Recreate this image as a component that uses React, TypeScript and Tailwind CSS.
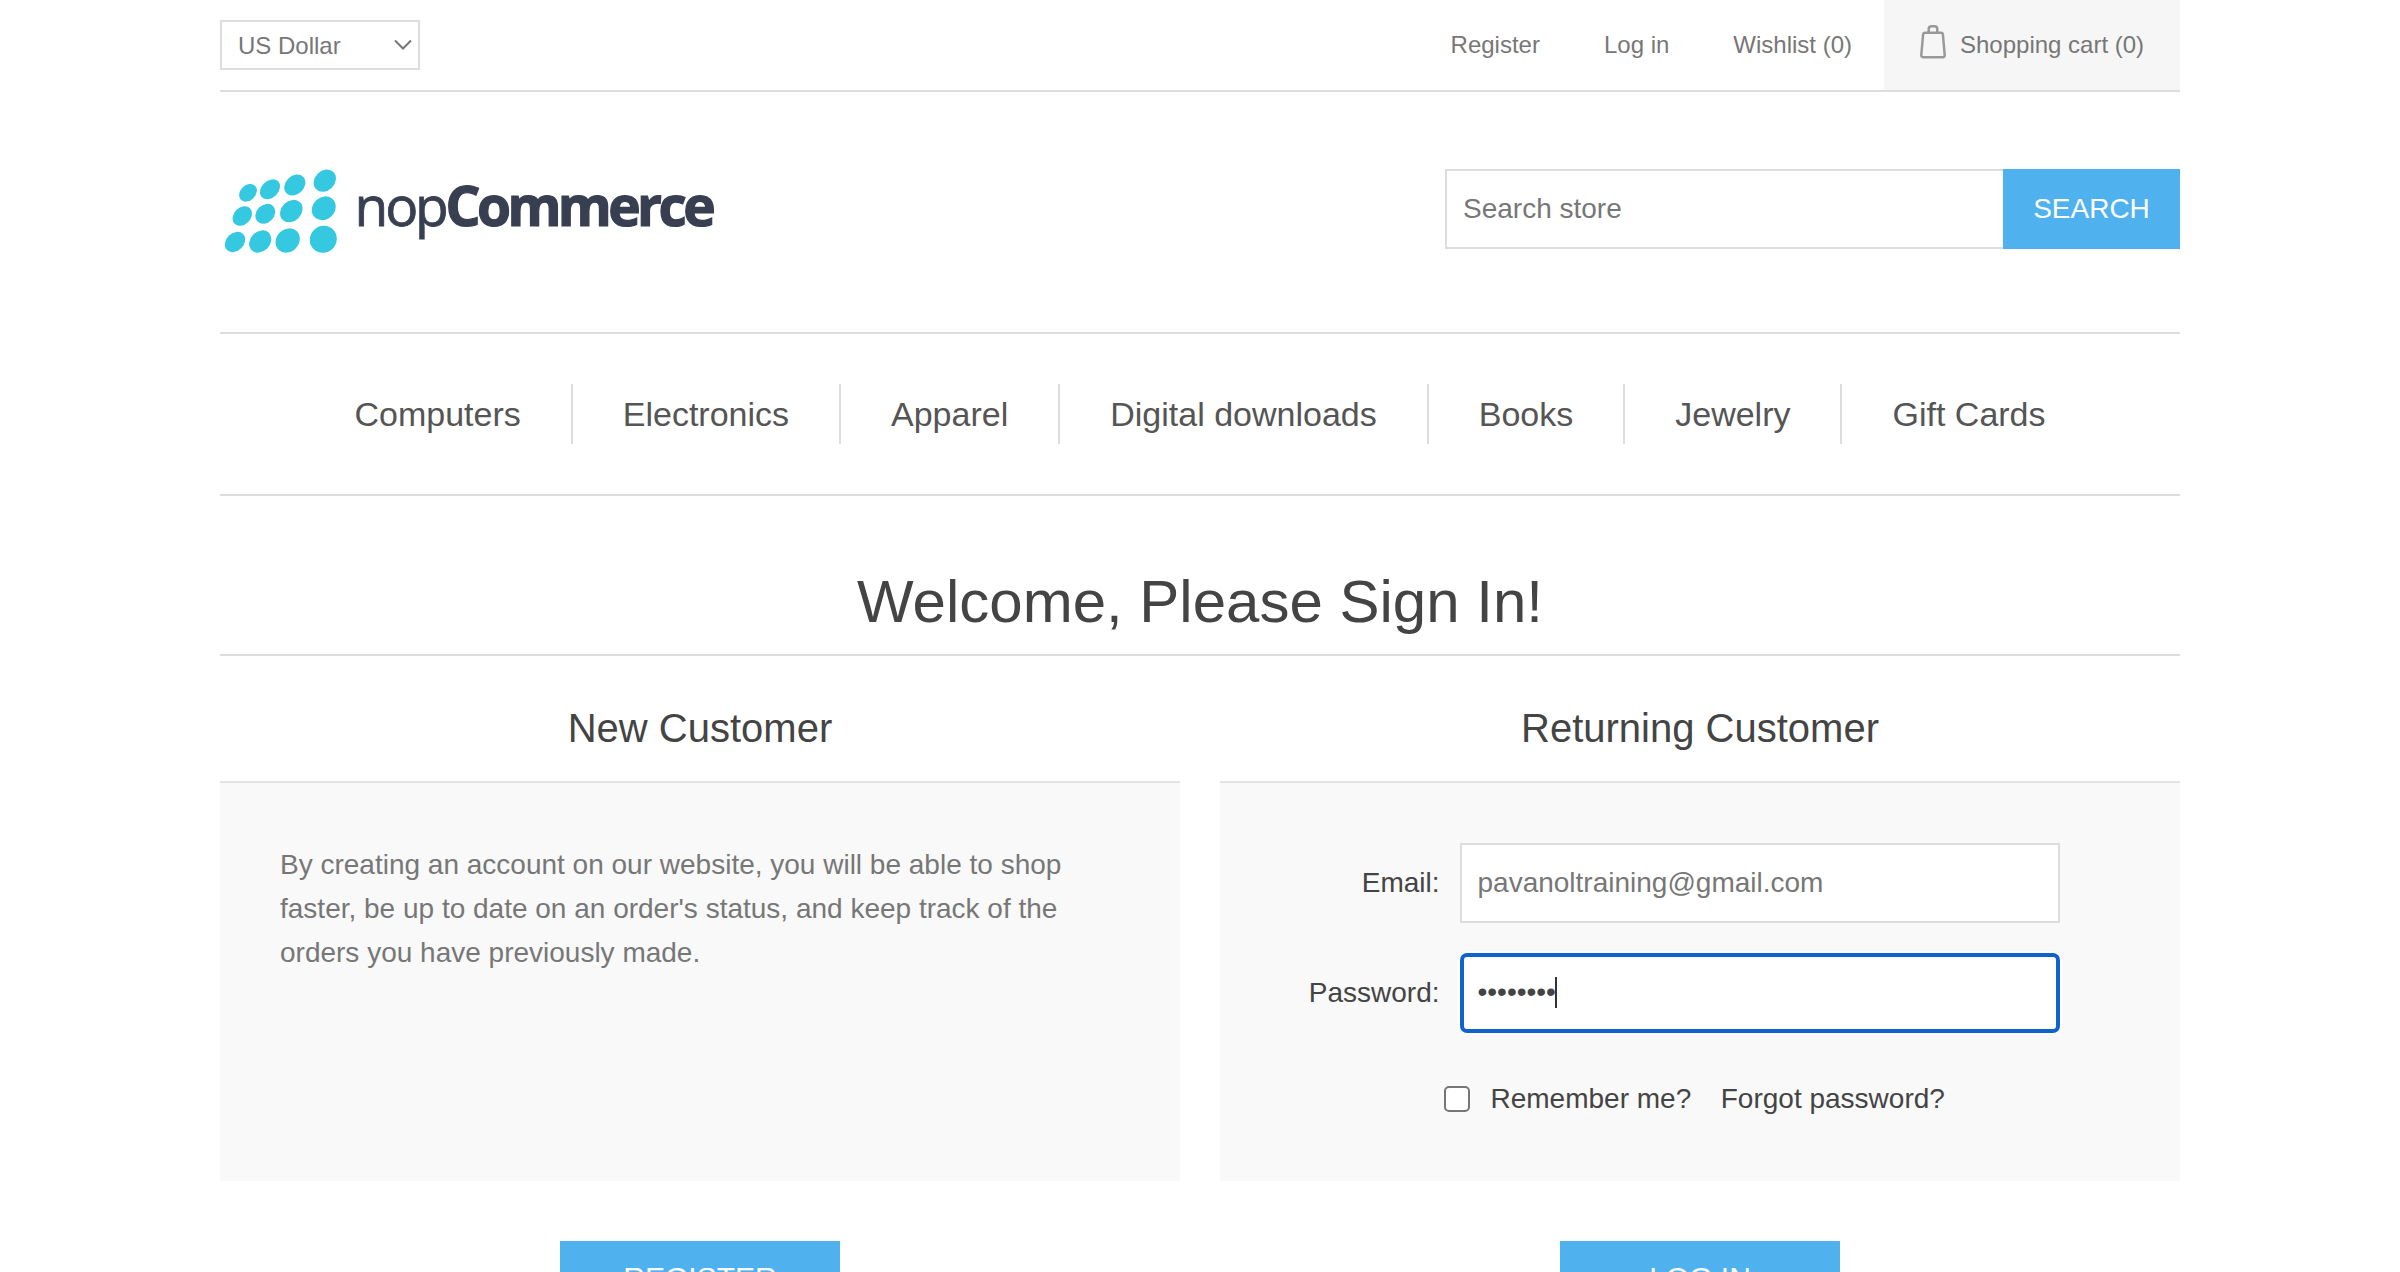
const dots = [
  [248, 192.3, 10, 7.6], [270, 188.8, 11.4, 8.4], [294.8, 184.5, 11.8, 9.2], [324.8, 180.2, 12.2, 10],
  [242.3, 215.5, 10.9, 8.4], [265.3, 213.3, 11, 8.8], [291.3, 210.6, 12.4, 10], [323.8, 207.8, 12.8, 11],
  [235, 241.5, 11.4, 8.8], [260.2, 241, 12.3, 9.8], [287.7, 240, 13, 11.2], [323.3, 238.8, 13.8, 13.2],
];

function Logo() {
  return (
    <svg width="500" height="120" viewBox="220 149.5 500 120" className="block blur-[0.6px]" aria-label="nopCommerce">
      <g fill="#34c8e1">
        {dots.map(([x, y, a, b]) => (
          <ellipse key={`${x}-${y}`} cx={x} cy={y} rx={a} ry={b} transform={`rotate(-45 ${x} ${y})`} />
        ))}
      </g>
      <g fill="#383f50" stroke="#383f50" fontFamily='"Open Sans", sans-serif' fontSize="55">
        <text x="354.5" y="225" strokeWidth="0.8" letterSpacing="-3.1">nop</text>
        <text x="445.5" y="225" strokeWidth="1.2" fontWeight="700" letterSpacing="-3.6">Commerce</text>
      </g>
    </svg>
  );
}

const categories = ["Computers", "Electronics", "Apparel", "Digital downloads", "Books", "Jewelry", "Gift Cards"];

export default function App() {
  return (
    <div className="h-[1272px] w-[2400px] overflow-hidden bg-white font-['Liberation_Sans',Arial,sans-serif] text-[28px] text-[#444]">
      <div className="mx-auto w-[1960px]">
        <div className="flex h-[92px] items-start justify-between border-b-2 border-[#ddd] text-[24px] text-[#777]">
          <div className="mt-5 flex h-[50px] w-[200px] items-center justify-between border-2 border-[#ddd] pr-1.5 pl-4">
            <span className="pt-0.5">US Dollar</span>
            <svg width="18" height="12" viewBox="0 0 18 12" fill="none" stroke="#777" strokeWidth="2">
              <path d="M1 1.5 9 9.5 17 1.5" />
            </svg>
          </div>
          <div className="flex h-[90px] items-center">
            <a className="mr-16">Register</a>
            <a className="mr-16">Log in</a>
            <a className="mr-8">Wishlist (0)</a>
            <a className="flex h-[90px] w-[296px] items-center bg-[#f6f6f6] pl-9">
              <svg width="26" height="36" viewBox="0 0 26 36" fill="none" stroke="#999" strokeWidth="2.5" className="mr-[14px] mb-1.5 blur-[0.4px]">
                <path d="M5 8.7H21Q22.7 8.7 22.9 10.5L24.7 31Q24.8 33.2 22.7 33.2H3.3Q1.2 33.2 1.3 31L3.1 10.5Q3.3 8.7 5 8.7ZM8.7 8.5V5Q8.7 2.2 11.5 2.2H14.5Q17.3 2.2 17.3 5V8.5" />
              </svg>
              Shopping cart (0)
            </a>
          </div>
        </div>

        <div className="flex h-[242px] items-start justify-between border-b-2 border-[#ddd]">
          <div className="mt-[58px]"><Logo /></div>
          <div className="mt-[77px] flex h-20 w-[735px]">
            <div className="flex flex-1 items-center border-2 border-r-0 border-[#ddd] pl-4 text-[#777]">Search store</div>
            <button className="w-[177px] bg-[#50b1ef] text-white">SEARCH</button>
          </div>
        </div>

        <nav className="flex h-[162px] items-center justify-center border-b-2 border-[#ddd] text-[34px] text-[#555]">
          {categories.map((name, i) => (
            <a key={name} className={i ? "flex h-[60px] items-center border-l-2 border-[#ddd] px-[50px]" : "px-[50px]"}>
              {name}
            </a>
          ))}
        </nav>

        <h1 className="h-[160px] border-b-2 border-[#ddd] pt-[72px] text-center text-[60px] leading-[68px]">
          Welcome, Please Sign In!
        </h1>

        <div className="grid grid-cols-2 gap-10">
          <section>
            <h2 className="h-[125px] pt-[49px] text-center text-[40px] leading-[46px]">New Customer</h2>
            <div className="h-[400px] border-t-2 border-[#e4e4e4] bg-[#f9f9f9] px-[60px] pt-[60px] leading-[44px] text-[#777]">
              By creating an account on our website, you will be able to shop
              <br />
              faster, be up to date on an order's status, and keep track of the
              <br />
              orders you have previously made.
            </div>
            <button className="mx-auto mt-[60px] block h-[70px] w-[280px] bg-[#50b1ef] pt-0.5 text-[30px] text-white">REGISTER</button>
          </section>
          <section>
            <h2 className="h-[125px] pt-[49px] text-center text-[40px] leading-[46px]">Returning Customer</h2>
            <div className="h-[400px] border-t-2 border-[#e4e4e4] bg-[#f9f9f9] pt-[60px]">
              <div className="flex h-20 items-center">
                <span className="w-[219.5px] text-right">Email:</span>
                <div className="ml-[20.5px] flex h-20 w-[600px] items-center border-2 border-[#ddd] bg-white pl-[15.5px] text-[#777]">
                  pavanoltraining@gmail.com
                </div>
              </div>
              <div className="mt-[30px] flex h-20 items-center">
                <span className="w-[219.5px] text-right">Password:</span>
                <div className="ml-[20.5px] flex h-20 w-[600px] items-center rounded-[7px] border-4 border-[#1062cf] bg-white pb-0.5 pl-[13.5px] ring-2 ring-white">
                  ••••••••
                  <span className="-ml-[0.5px] h-[31px] w-[2px] bg-[#333]" />
                </div>
              </div>
              <div className="mt-[45px] flex items-center pl-[224px]">
                <span className="h-[26px] w-[26px] rounded-[5px] border-2 border-[#767676] bg-white" />
                <span className="ml-[20.5px]">Remember me?</span>
                <span className="ml-[29.5px]">Forgot password?</span>
              </div>
            </div>
            <button className="mx-auto mt-[60px] block h-[70px] w-[280px] bg-[#50b1ef] pt-0.5 text-[30px] text-white">LOG IN</button>
          </section>
        </div>
      </div>
    </div>
  );
}
